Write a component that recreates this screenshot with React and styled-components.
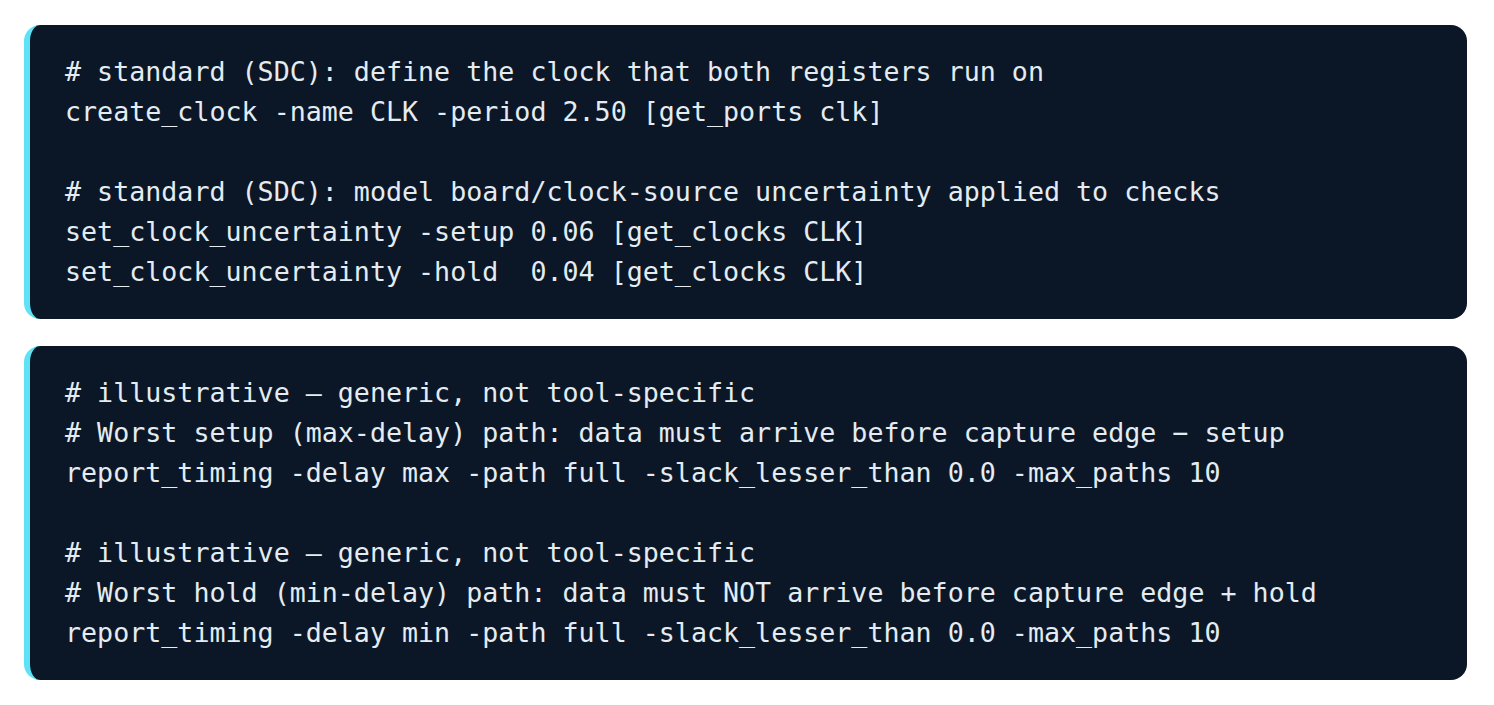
import React from "react";
import styled, { createGlobalStyle } from "styled-components";

const GlobalStyle = createGlobalStyle`
  body {
    margin: 0;
    background: #ffffff;
  }
`;

const Page = styled.div`
  display: flex;
  flex-direction: column;
  gap: 27px;
  padding: 25px 27px 25px 24px;
`;

const CodeBlock = styled.pre`
  margin: 0;
  padding: 27px 24px 27px 35px;
  background-color: #0b1727;
  border-left: 6px solid #5ee2f6;
  border-radius: 16px;
  color: #e4ecf2;
  font-family: "DejaVu Sans Mono", "Liberation Mono", monospace;
  font-size: 26.67px;
  line-height: 40px;
  white-space: pre;
  overflow: hidden;
`;

const clockSdc = `# standard (SDC): define the clock that both registers run on
create_clock -name CLK -period 2.50 [get_ports clk]

# standard (SDC): model board/clock-source uncertainty applied to checks
set_clock_uncertainty -setup 0.06 [get_clocks CLK]
set_clock_uncertainty -hold  0.04 [get_clocks CLK]`;

const reportCmds = `# illustrative — generic, not tool-specific
# Worst setup (max-delay) path: data must arrive before capture edge − setup
report_timing -delay max -path full -slack_lesser_than 0.0 -max_paths 10

# illustrative — generic, not tool-specific
# Worst hold (min-delay) path: data must NOT arrive before capture edge + hold
report_timing -delay min -path full -slack_lesser_than 0.0 -max_paths 10`;

function App() {
  return (
    <>
      <GlobalStyle />
      <Page>
        <CodeBlock>{clockSdc}</CodeBlock>
        <CodeBlock>{reportCmds}</CodeBlock>
      </Page>
    </>
  );
}

export default App;
